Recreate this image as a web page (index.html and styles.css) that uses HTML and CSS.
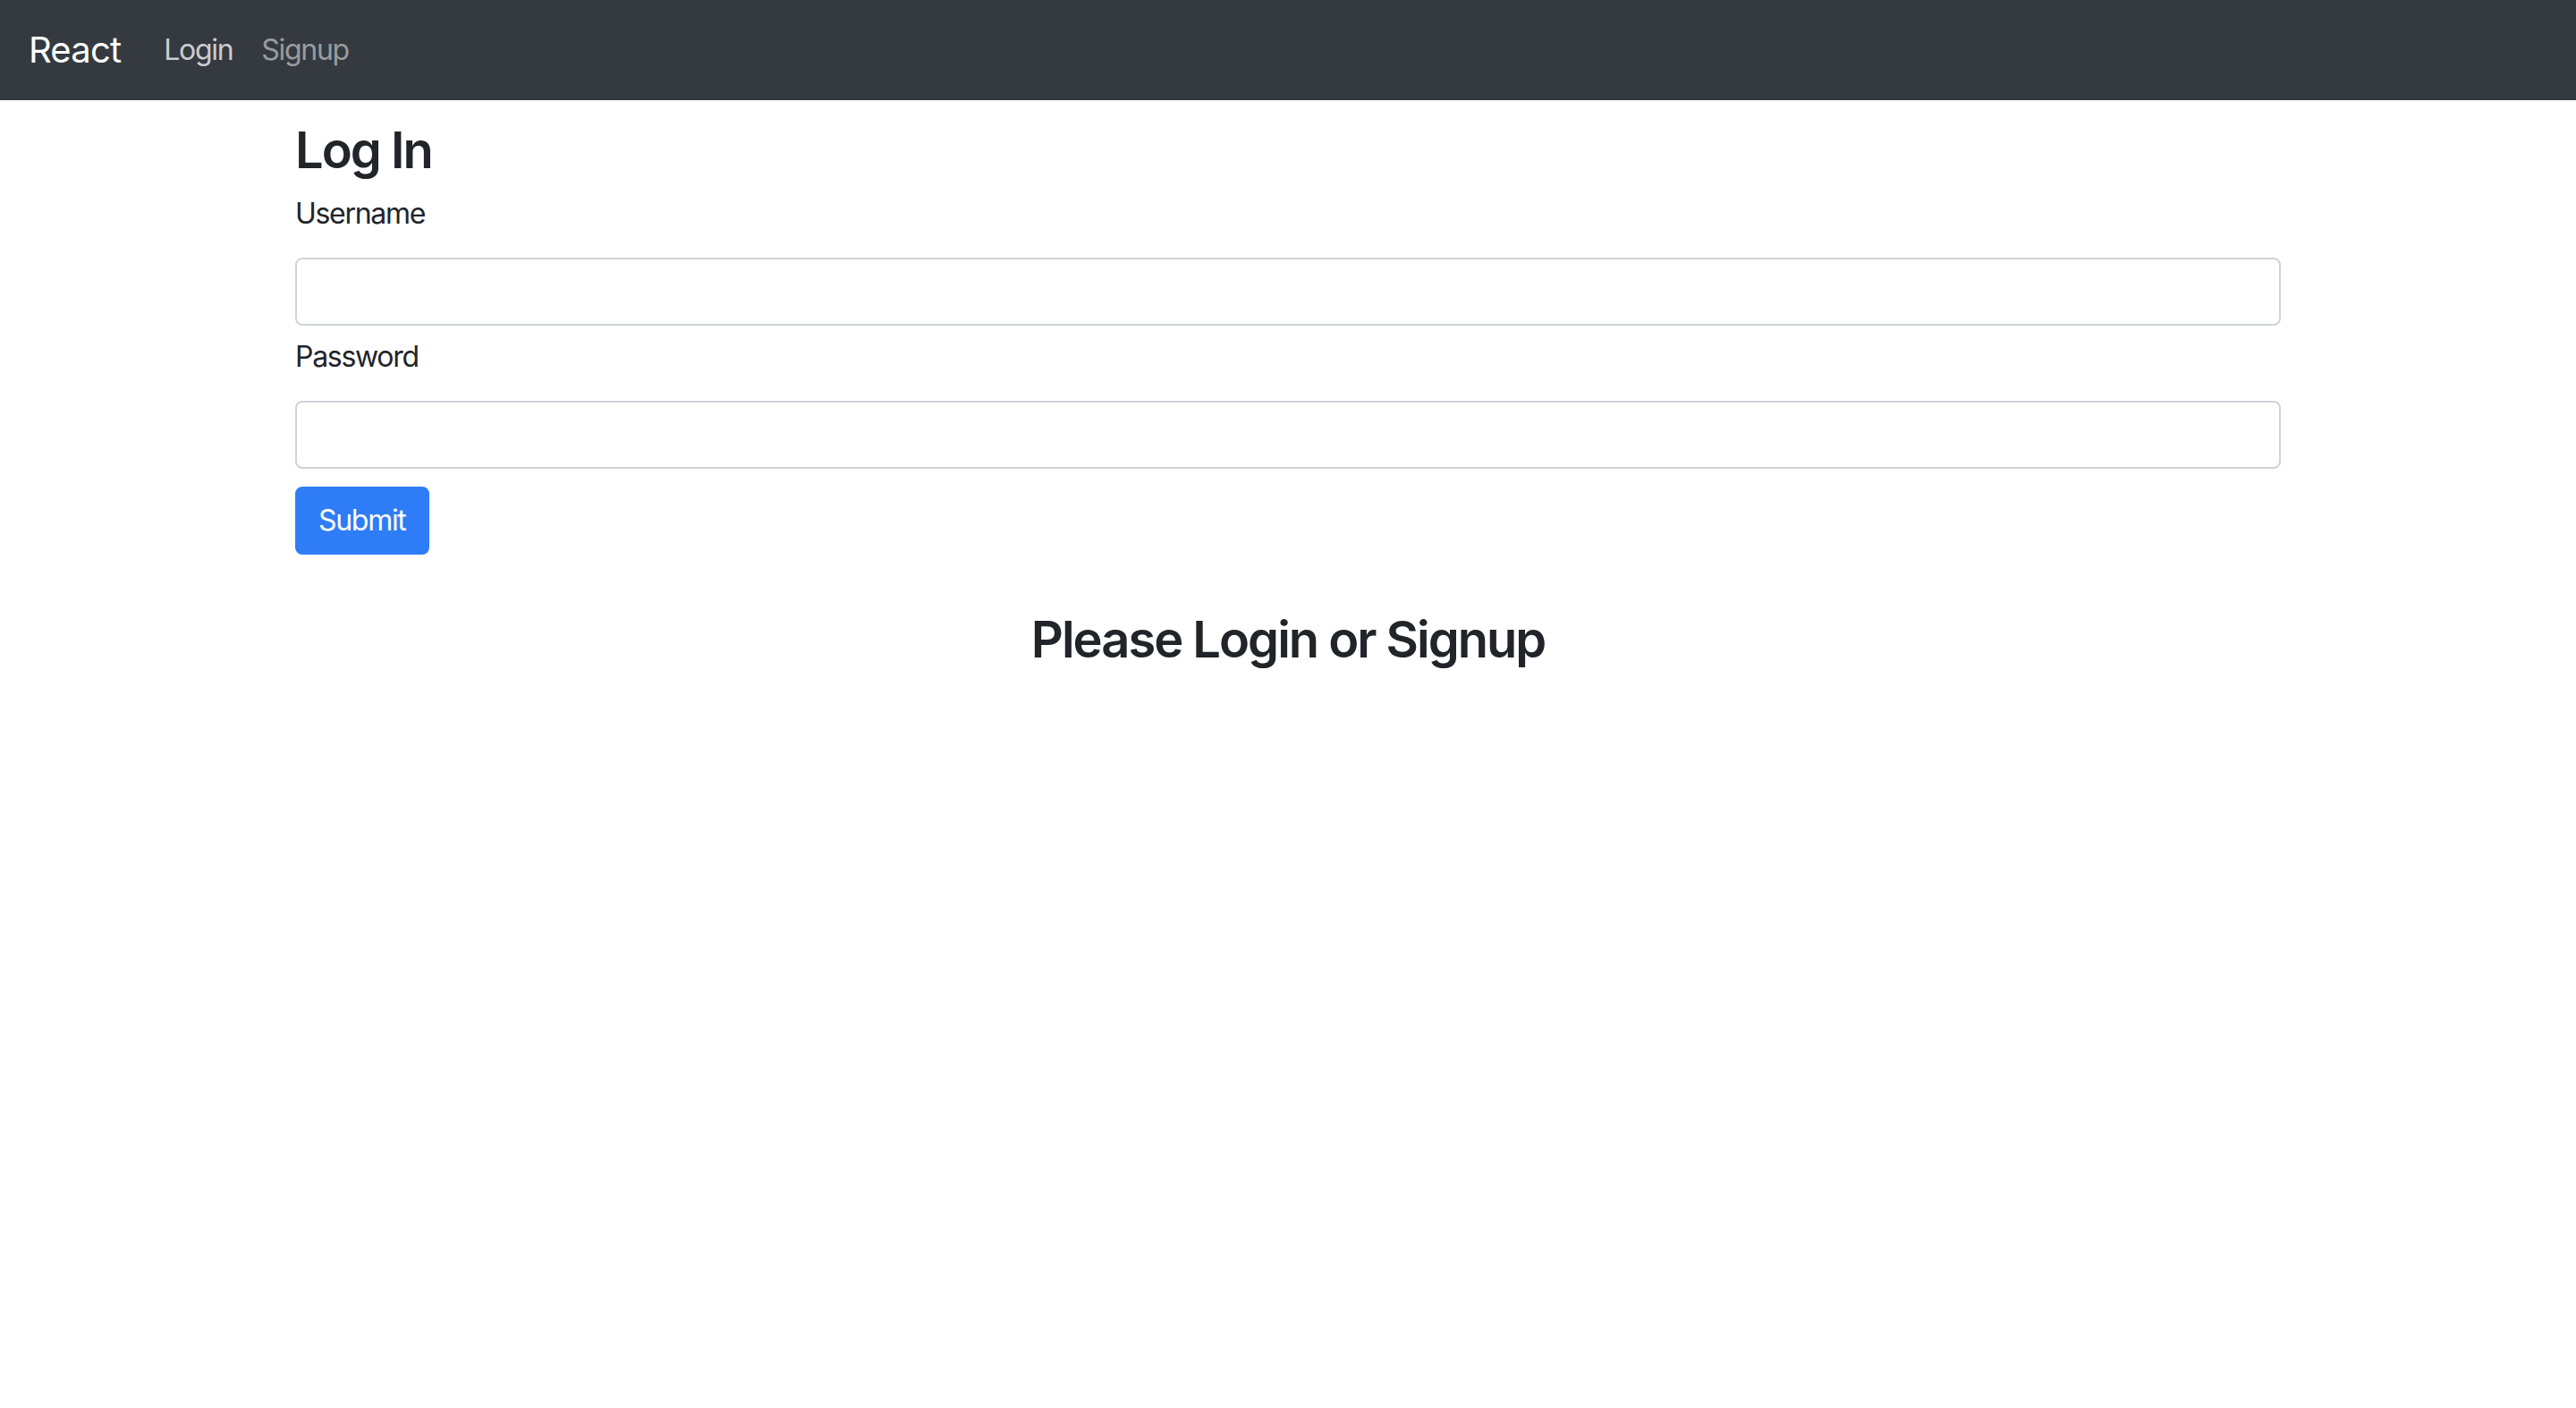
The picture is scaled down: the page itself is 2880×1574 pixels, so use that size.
FILE: index.html
```html
<!DOCTYPE html>
<html lang="en">
<head>
<meta charset="utf-8">
<title>React</title>
<link rel="stylesheet" href="styles.css">
</head>
<body>
<nav class="navbar">
  <a class="brand" href="#">React</a>
  <ul class="nav">
    <li><a class="nav-link hover" href="#">Login</a></li>
    <li><a class="nav-link" href="#">Signup</a></li>
  </ul>
</nav>
<main class="container">
  <h3 class="title">Log In</h3>
  <form class="form">
    <label class="label" for="username">Username</label>
    <input class="input" id="username" type="text">
    <label class="label second" for="password">Password</label>
    <input class="input" id="password" type="password">
    <button class="btn" type="button">Submit</button>
  </form>
  <h3 class="title notice">Please Login or Signup</h3>
</main>
</body>
</html>
```
FILE: styles.css
```css
html, body {
  margin: 0;
  padding: 0;
  background: #fff;
}
body {
  font-family: Inter, "Noto Sans", "Liberation Sans", sans-serif;
  font-size: 32px;
  line-height: 1.5;
  letter-spacing: -1.3px;
  color: #212529;
}
a { text-decoration: none; }

.navbar {
  display: flex;
  align-items: center;
  padding: 16px 32px;
  background: #343a40;
}
.brand {
  font-size: 40px;
  line-height: 60px;
  padding: 10px 0;
  margin-right: 32px;
  letter-spacing: -0.8px;
  color: #fff;
}
.nav {
  display: flex;
  list-style: none;
  margin: 0;
  padding: 0;
}
.nav-link {
  display: block;
  padding: 16px;
  line-height: 48px;
  color: rgba(255, 255, 255, 0.5);
}
.nav-link.hover {
  color: rgba(255, 255, 255, 0.75);
}

.container {
  width: 2220px;
  margin: 0 auto;
  padding-top: 23px;
}
.title {
  font-size: 56px;
  line-height: 1.2;
  font-weight: 600;
  letter-spacing: -2px;
  margin: 0 0 13px;
}
.form {
  display: flex;
  flex-direction: column;
  align-items: flex-start;
}
.label {
  display: block;
  line-height: 48px;
  margin-bottom: 25px;
}
.label.second {
  margin-top: 11px;
}
.input {
  display: block;
  box-sizing: border-box;
  width: 100%;
  height: 76px;
  padding: 12px 24px;
  font-family: inherit;
  font-size: 32px;
  line-height: 48px;
  color: #495057;
  background: #fff;
  border: 2px solid #ced4da;
  border-radius: 8px;
  margin: 0;
}
.btn {
  margin-top: 20px;
  box-sizing: border-box;
  height: 76px;
  padding: 12px 24px;
  font-family: inherit;
  font-size: 32px;
  line-height: 48px;
  letter-spacing: -1.3px;
  color: #fff;
  background: #2e7df6;
  border: 2px solid #2e7df6;
  border-radius: 8px;
}
.notice {
  text-align: center;
  margin-top: 62px;
}
```
